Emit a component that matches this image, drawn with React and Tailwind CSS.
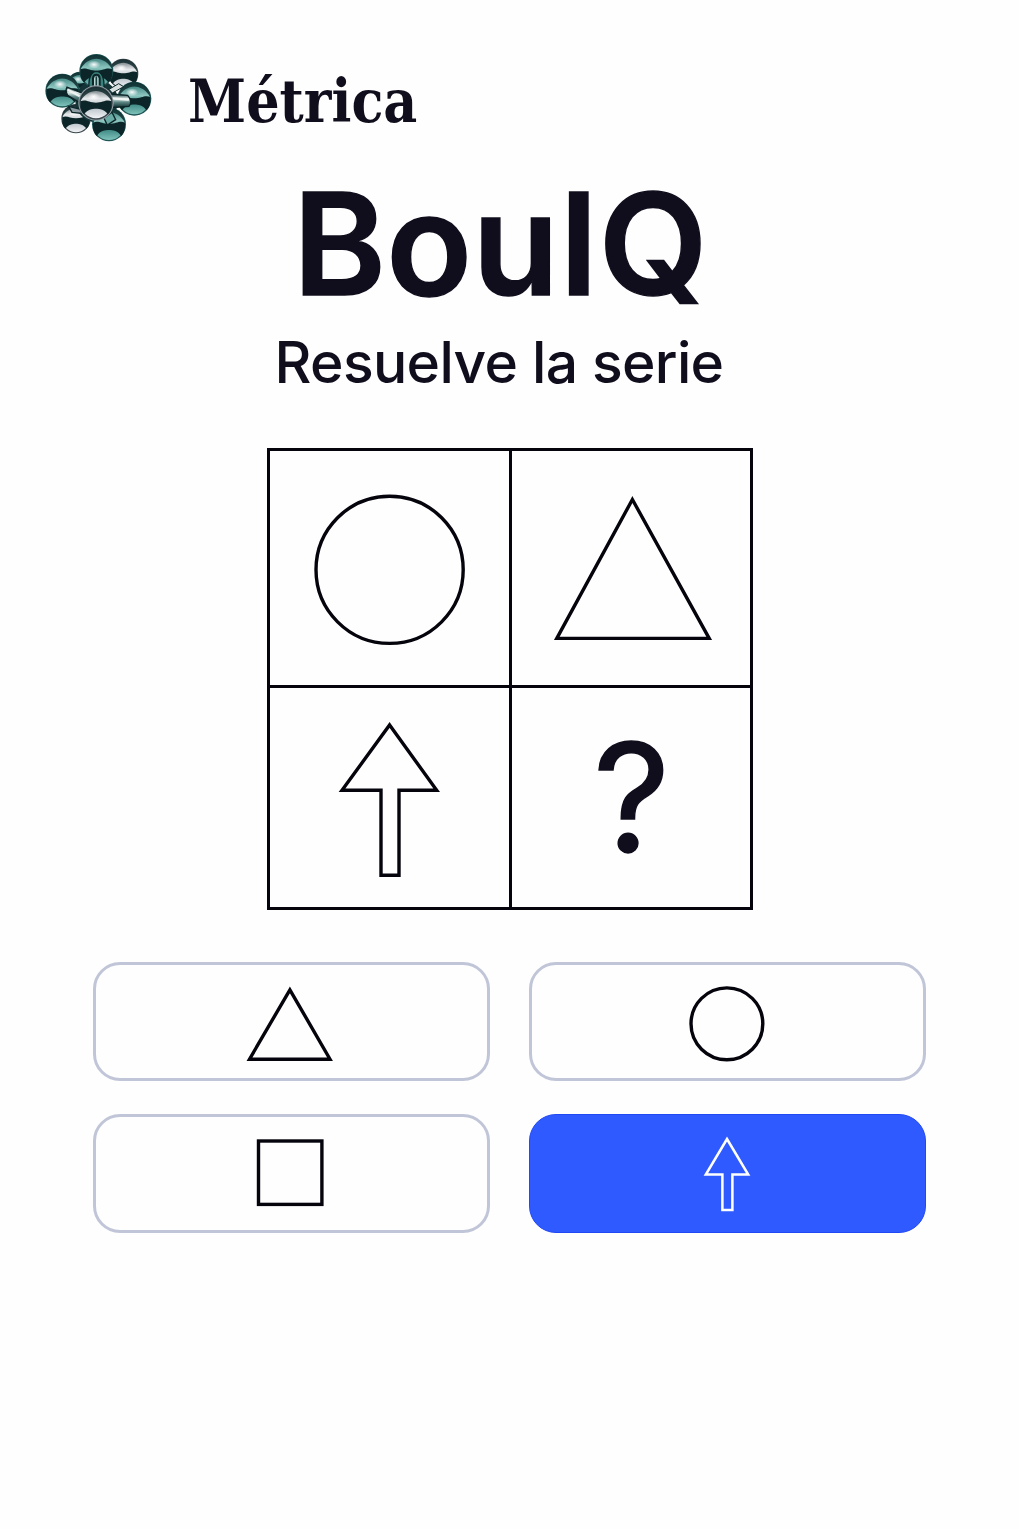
const INK = "#100d1c";

function Ball({ cx, cy, r, teal }) {
  const dark = "#0b2528";
  return (
    <g transform={`translate(${cx} ${cy}) scale(${r / 50})`}>
      <circle r="50" fill={teal ? "#1f5555" : "#3a464d"} />
      <circle r="46" fill={teal ? "url(#tealBall)" : "url(#silverBall)"} />
      <path d="M-47 -5 C-30 -12 -22 -1 0 -1 C22 -1 30 -12 47 -5 C48 16 44 26 36 34 C26 20 12 17 0 17 C-12 17 -26 20 -36 34 C-44 26 -48 16 -47 -5 Z" fill={dark} />
      <path d="M-47 -5 C-44 -36 -18 -48 0 -48 C18 -48 44 -36 47 -5 C36 -24 18 -36 0 -36 C-18 -36 -36 -24 -47 -5 Z" fill={dark} opacity="0.8" />
      <ellipse cx="-7" cy="-19" rx="19" ry="12" fill="url(#shine)" />
    </g>
  );
}

function Molecule() {
  return (
    <svg className="h-[105px] w-[130px] shrink-0" viewBox="0 0 390 315" aria-hidden="true">
      <defs>
        <linearGradient id="tealBall" x1="0" y1="0" x2="0" y2="1">
          <stop offset="0" stopColor="#2f7572" />
          <stop offset="0.4" stopColor="#8cc5bf" />
          <stop offset="0.65" stopColor="#3b8581" />
          <stop offset="1" stopColor="#80c2bb" />
        </linearGradient>
        <linearGradient id="silverBall" x1="0" y1="0" x2="0" y2="1">
          <stop offset="0" stopColor="#5b686d" />
          <stop offset="0.35" stopColor="#e6e9eb" />
          <stop offset="0.65" stopColor="#b9c2c9" />
          <stop offset="1" stopColor="#f2f3f5" />
        </linearGradient>
        <linearGradient id="rod" x1="0" y1="0" x2="0" y2="1">
          <stop offset="0" stopColor="#153437" />
          <stop offset="0.35" stopColor="#e2eeeb" />
          <stop offset="0.6" stopColor="#5c8583" />
          <stop offset="1" stopColor="#0d292c" />
        </linearGradient>
        <radialGradient id="shine">
          <stop offset="0" stopColor="#fff" stopOpacity="0.95" />
          <stop offset="1" stopColor="#fff" stopOpacity="0" />
        </radialGradient>
      </defs>
      <Ball cx={134} cy={116} r={36} teal />
      <Ball cx={265} cy={86} r={45} />
      <Ball cx={123} cy={221} r={44} />
      <circle cx="185" cy="168" r="64" fill="#143437" />
      <Ball cx={222} cy={238} r={51} teal />
      <Ball cx={184} cy={78} r={51} teal />
      <Ball cx={82} cy={137} r={51} teal />
      <Ball cx={298} cy={161} r={51} teal />
      <path d="M162 128 C160 98 169 80 184 79 C199 80 208 98 207 128 Z" fill="#39817c" stroke="#0b2528" strokeWidth="4" />
      <path d="M174 126 V100 C175 86 193 86 194 100 V126" fill="#b8d8d3" stroke="#0b2528" strokeWidth="6" />
      <path d="M184 94 V124" stroke="#173f40" strokeWidth="5" />
      <path d="M96 126 L145 146 L137 175 L98 151 Q90 137 96 126Z" fill="url(#rod)" stroke="#0b2528" strokeWidth="4" />
      <path d="M100 135 L140 157" stroke="#edf3f1" strokeWidth="7" strokeLinecap="round" />
      <path d="M228 147 L278 151 Q294 169 282 184 L228 188Z" fill="url(#rod)" stroke="#0b2528" strokeWidth="4" />
      <path d="M234 160 L279 164" stroke="#f0f5f3" strokeWidth="7" strokeLinecap="round" />
      <path d="M222 133 L251 116 L266 125 L232 144Z" fill="#d8e1df" stroke="#0b2528" strokeWidth="3" />
      <path d="M101 184 L134 192 L143 205 L111 202Z" fill="#8c9ba2" stroke="#0b2528" strokeWidth="4" />
      <path d="M207 220 L231 202 L242 224 L217 240Z" fill="#69aaa4" stroke="#0b2528" strokeWidth="4" />
      <circle cx="183" cy="174" r="53" fill="#9aa5aa" />
      <Ball cx={183} cy={174} r={50} />
    </svg>
  );
}

function Cell({ width, height, children }) {
  return (
    <div className="flex items-center justify-center overflow-hidden bg-[#fefefe]">
      <svg width={width} height={height} viewBox={`0 0 ${width} ${height}`} fill="none" stroke="#05040c" strokeWidth="3.4">
        {children}
      </svg>
    </div>
  );
}

function Option({ selected, label, children }) {
  return (
    <button
      aria-label={label}
      className={
        selected
          ? "flex h-[119px] items-center justify-center rounded-[27px] border border-[#2148f5] bg-[#2e5aff] text-white"
          : "flex h-[119px] items-center justify-center rounded-[27px] border-[3px] border-[#c1c5d8] bg-[#fefefe] text-[#05040c]"
      }
    >
      <svg className="h-[90px] w-[120px] shrink-0" viewBox="0 0 120 90" fill="none" stroke="currentColor" strokeWidth={selected ? 2.5 : 3.4}>
        {children}
      </svg>
    </button>
  );
}

export default function App() {
  return (
    <main className="flex h-[1529px] w-[1019px] flex-col overflow-hidden bg-[#fefefe] font-['Inter',sans-serif]" style={{ color: INK }}>
      <header className="flex h-[150px] items-start pt-[45px] pl-[35px]">
        <Molecule />
        <span className="mt-[21px] ml-[23px] origin-left scale-x-[0.89] font-['DejaVu_Serif',serif] text-[59px] leading-[72px] font-bold">Métrica</span>
      </header>

      <h1 className="h-[174px] w-[1001px] text-center text-[141px] leading-[187px] font-semibold tracking-[0.4px] [-webkit-text-stroke:1.4px_#100d1c]">BouIQ</h1>
      <p className="h-[124px] w-[998px] text-center text-[57px] leading-[77px] font-medium tracking-[-0.65px]">Resuelve la serie</p>

      <section className="ml-[267px] grid w-[486px] grid-cols-[239px_238px] grid-rows-[234px_219px] gap-[3px] bg-[#05040c] p-[3px]">
        <Cell width={239} height={234}>
          <circle cx="119.6" cy="118.8" r="73.6" />
        </Cell>
        <Cell width={238} height={234}>
          <path d="M120.4 48.5 L197.2 187.4 H44.8 Z" />
        </Cell>
        <Cell width={239} height={219}>
          <path d="M119.6 37 L166.7 102.3 H129 V187.3 H111 V102.3 H72 Z" />
        </Cell>
        <div className="flex items-start justify-center overflow-hidden bg-[#fefefe]">
          <span className="ml-[1px] text-[151px] leading-[219px] font-normal [-webkit-text-stroke:1.4px_#100d1c]">?</span>
        </div>
      </section>

      <section className="mt-[52px] ml-[93px] grid w-[833px] grid-cols-2 gap-x-[39px] gap-y-[33px]">
        <Option label="Triángulo">
          <path d="M57.9 12.8 L98 82.2 H17.5 Z" />
        </Option>
        <Option label="Círculo">
          <circle cx="58.9" cy="46.8" r="35.9" />
        </Option>
        <Option label="Cuadrado">
          <rect x="26.5" y="12" width="63.4" height="63.4" />
        </Option>
        <Option label="Flecha" selected>
          <path d="M59 10 L80.2 45.5 H64.4 V81 H54.4 V45.5 H37.8 Z" />
        </Option>
      </section>
    </main>
  );
}
